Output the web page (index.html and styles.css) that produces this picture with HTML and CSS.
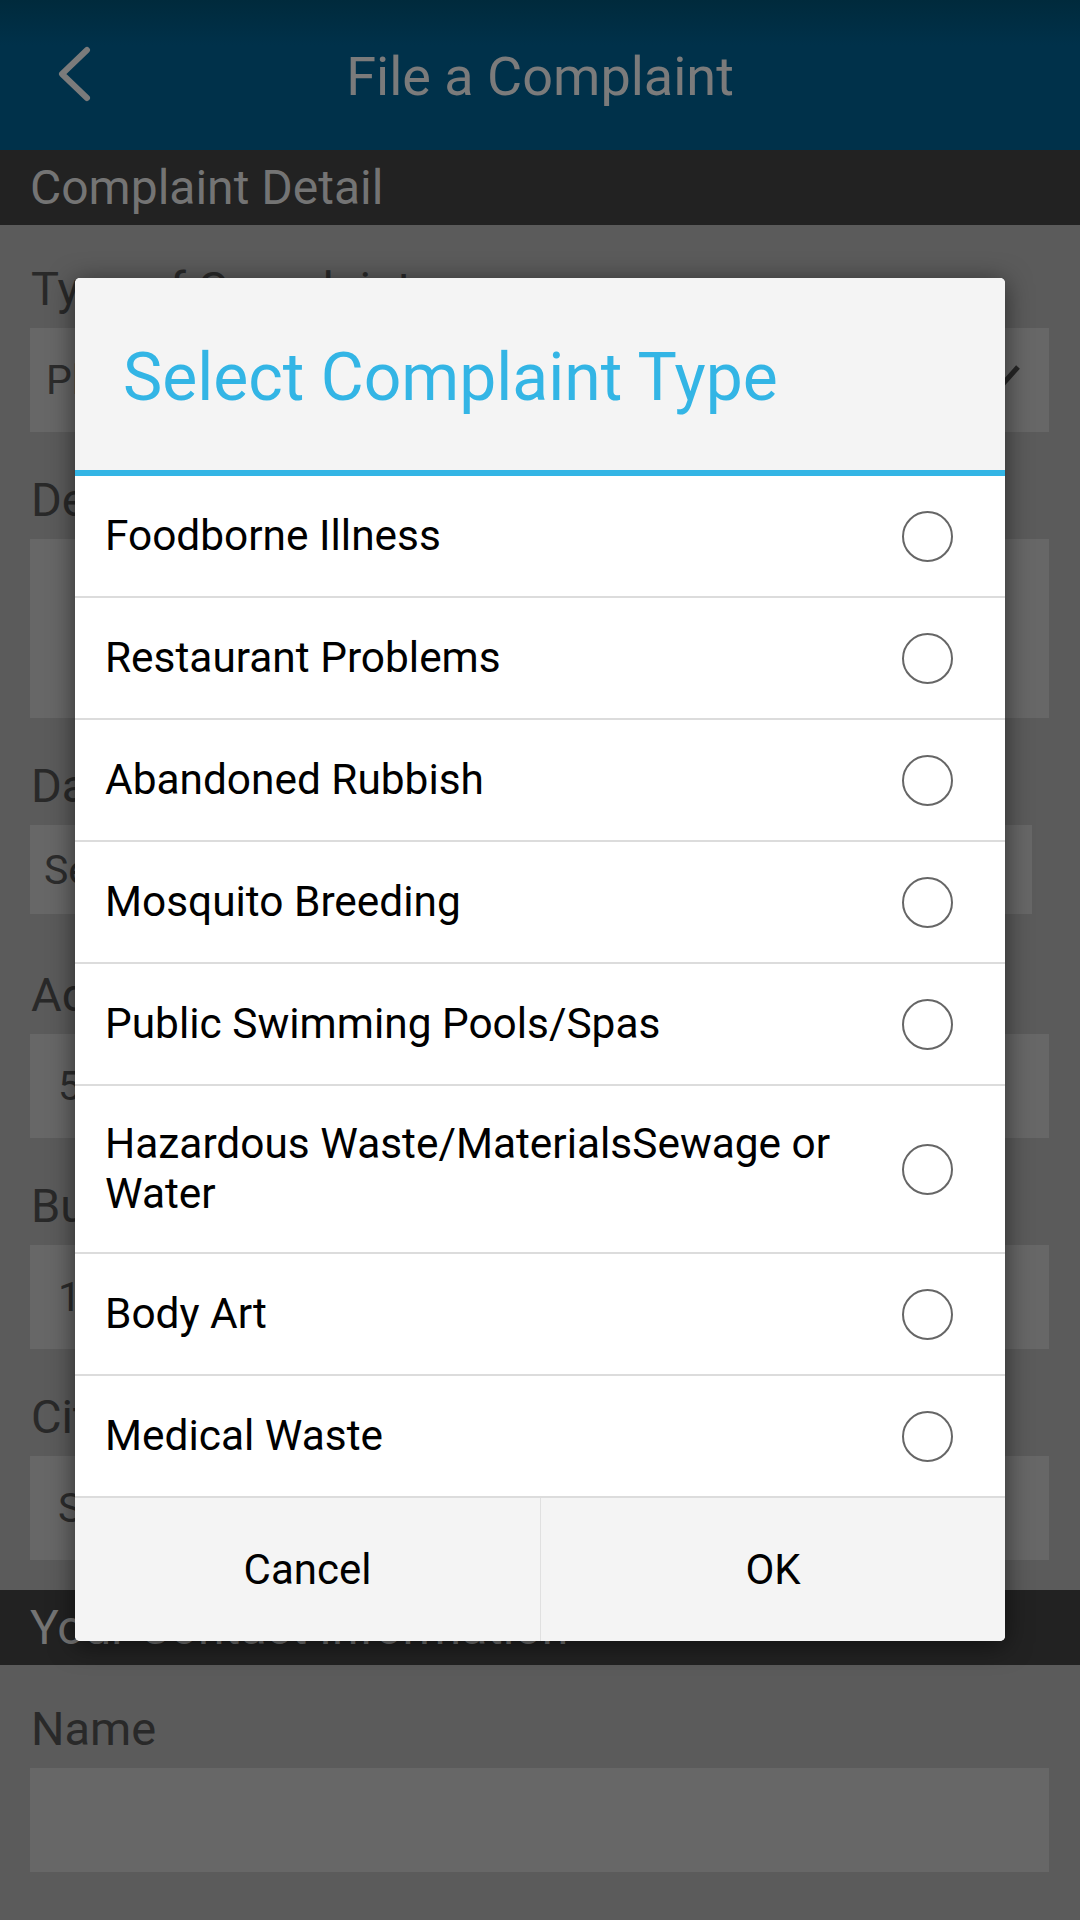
FILE: index.html
```html
<!DOCTYPE html>
<html lang="en">
<head>
<meta charset="utf-8">
<title>File a Complaint</title>
<link rel="stylesheet" href="styles.css">
</head>
<body>
<div class="screen">
  <header class="appbar">
    <span class="back">
      <svg width="40" height="56" viewBox="0 0 40 56"><polyline points="31,4 6,28 31,52" fill="none" stroke="#7b7b7b" stroke-width="6" stroke-linecap="round" stroke-linejoin="round"/></svg>
    </span>
    <h1 class="appbar-title">File a Complaint</h1>
    <span></span>
  </header>

  <div class="section-head">Complaint Detail</div>
  <div class="form">
    <div class="field">
      <div class="label">Type of Complaint</div>
      <div class="box spinner">
        <span class="value">Please select</span>
        <svg class="caret" width="40" height="26" viewBox="0 0 40 26"><polyline points="4,4 20,22 36,4" fill="none" stroke="#262626" stroke-width="5"/></svg>
      </div>
    </div>
    <div class="field">
      <div class="label">Description</div>
      <div class="box textarea"></div>
    </div>
    <div class="field field-date">
      <div class="label">Date of Incident</div>
      <div class="box datebox"><span class="value">Select Date</span></div>
    </div>
    <div class="field">
      <div class="label">Address</div>
      <div class="box edit"><span class="value">555 Main Street</span></div>
    </div>
    <div class="field">
      <div class="label">Building / Unit</div>
      <div class="box edit"><span class="value">101</span></div>
    </div>
    <div class="field">
      <div class="label">City</div>
      <div class="box edit"><span class="value">San Jose</span></div>
    </div>
  </div>

  <div class="section-head">Your Contact Information</div>
  <div class="form">
    <div class="field">
      <div class="label">Name</div>
      <div class="box edit"></div>
    </div>
    <div class="field">
      <div class="label">Phone Number</div>
      <div class="box edit"></div>
    </div>
  </div>

  <div class="modal">
    <div class="dialog">
      <div class="dialog-title">Select Complaint Type</div>
      <ul class="options">
        <li class="option"><span class="option-text">Foodborne Illness</span><span class="radio"></span></li>
        <li class="option"><span class="option-text">Restaurant Problems</span><span class="radio"></span></li>
        <li class="option"><span class="option-text">Abandoned Rubbish</span><span class="radio"></span></li>
        <li class="option"><span class="option-text">Mosquito Breeding</span><span class="radio"></span></li>
        <li class="option"><span class="option-text">Public Swimming Pools/Spas</span><span class="radio"></span></li>
        <li class="option"><span class="option-text">Hazardous Waste/MaterialsSewage or Water</span><span class="radio"></span></li>
        <li class="option"><span class="option-text">Body Art</span><span class="radio"></span></li>
        <li class="option"><span class="option-text">Medical Waste</span><span class="radio"></span></li>
      </ul>
      <div class="buttons">
        <button class="btn">Cancel</button>
        <button class="btn">OK</button>
      </div>
    </div>
  </div>
</div>
</body>
</html>
```

FILE: styles.css
```css
* { box-sizing: border-box; }

html, body {
  margin: 0;
  padding: 0;
}

body {
  width: 1080px;
  height: 1920px;
  overflow: hidden;
  background: #5b5b5b;
  font-family: Roboto, "Noto Sans", sans-serif;
}

.screen {
  position: relative;
  width: 1080px;
  height: 1920px;
  overflow: hidden;
  background: #5b5b5b;
}

/* App bar */
.appbar {
  height: 150px;
  display: grid;
  grid-template-columns: 150px 1fr 150px;
  align-items: center;
  background: linear-gradient(#002a3c, #00314a 30%, #00314a);
}

.back {
  display: flex;
  align-items: center;
  padding-left: 56px;
  padding-bottom: 2px;
}

.appbar-title {
  margin: 0;
  text-align: center;
  font-weight: 400;
  font-size: 54px;
  line-height: 66px;
  color: #7b7b7b;
  padding-top: 4px;
}

/* Section header */
.section-head {
  height: 75px;
  background: #222222;
  color: #747474;
  font-size: 48px;
  line-height: 75px;
  padding-left: 30px;
}

/* Form */
.form {
  padding: 36px 31px 30px 30px;
  display: flex;
  flex-direction: column;
  gap: 40px;
}

.label {
  font-size: 47px;
  line-height: 56px;
  color: #292929;
  margin-bottom: 11px;
  padding-left: 1px;
  white-space: nowrap;
}

.box {
  height: 104px;
  background: #676767;
  display: flex;
  align-items: center;
  font-size: 41px;
  color: #2c2c2c;
  white-space: nowrap;
  overflow: hidden;
}

.spinner {
  justify-content: space-between;
  padding: 0 27px 0 16px;
}

.caret { margin-top: -8px; }

.textarea { height: 179px; }

.datebox {
  height: 89px;
  margin-right: 17px;
  padding-left: 14px;
}

.field-date { margin-bottom: 13px; }

.edit { padding-left: 28px; }

/* Modal */
.modal {
  position: absolute;
  inset: 0;
  display: flex;
  justify-content: center;
  align-items: flex-start;
  padding-top: 278px;
}

.dialog {
  width: 930px;
  border-radius: 5px;
  overflow: hidden;
  background: #ffffff;
  box-shadow: 0 4px 26px rgba(0, 0, 0, 0.55);
}

.dialog-title {
  height: 198px;
  background: #f4f4f4;
  border-bottom: 6px solid #33b5e5;
  color: #33b5e5;
  font-size: 66px;
  padding: 6px 0 0 48px;
  display: flex;
  align-items: center;
}

.options {
  list-style: none;
  margin: 0;
  padding: 0;
}

.option {
  min-height: 122px;
  padding: 33px 52px 33px 30px;
  border-bottom: 2px solid #dcdcdc;
  display: flex;
  align-items: center;
  font-size: 42.4px;
  line-height: 50px;
  color: #000000;
}

.option-text { flex: 1; }

.radio {
  flex: none;
  width: 51px;
  height: 51px;
  margin-left: 24px;
  border-radius: 50%;
  border: 2px solid #666666;
}

.buttons {
  display: grid;
  grid-template-columns: 1fr 1fr;
  height: 143px;
  background: #f4f4f4;
}

.btn {
  border: 0;
  background: transparent;
  font-family: Roboto, "Noto Sans", sans-serif;
  font-size: 42px;
  color: #000000;
  padding: 0;
}

.btn + .btn { border-left: 1px solid #e0e0e0; }
```
